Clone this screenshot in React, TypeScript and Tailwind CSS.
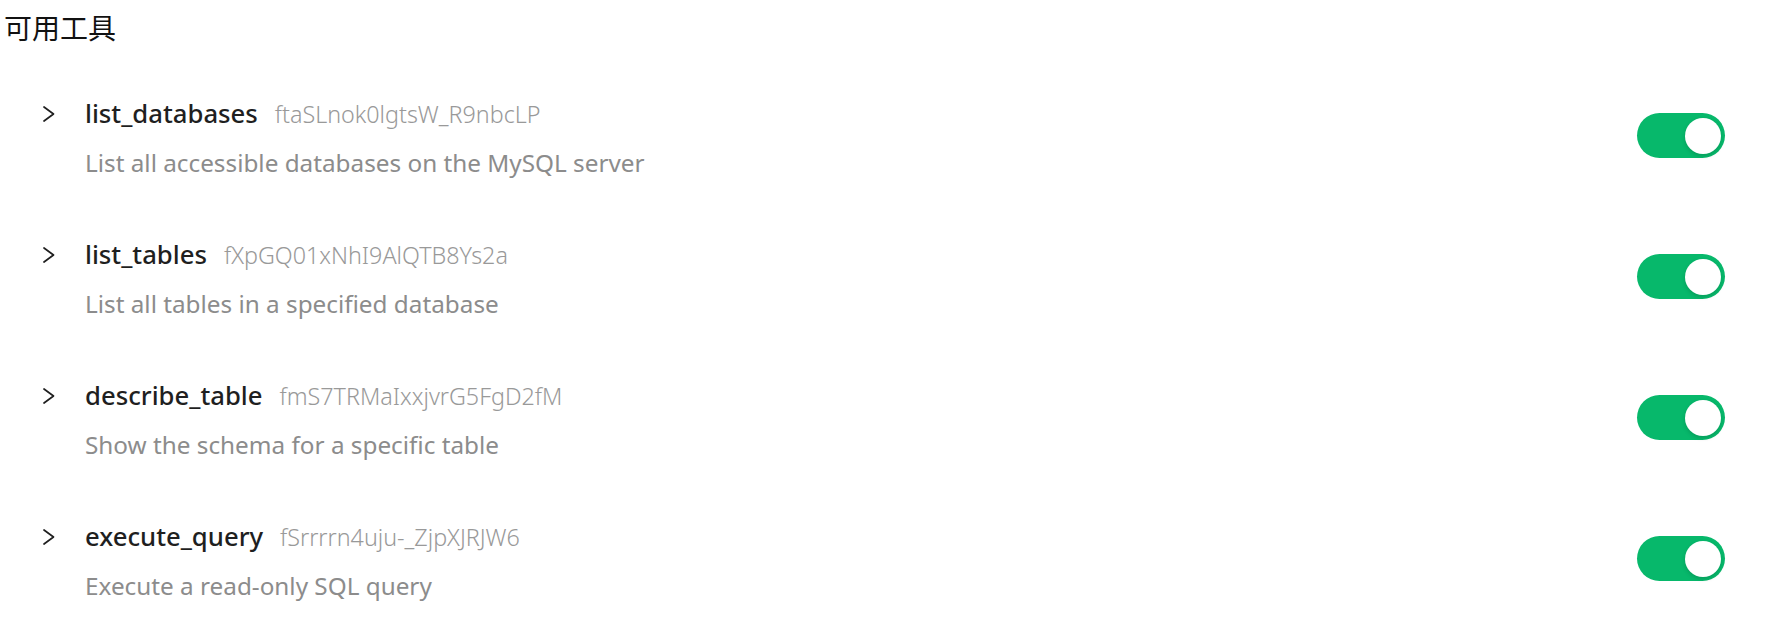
import React from "react";

type Tool = {
  name: string;
  id: string;
  description: string;
};

const TOOLS: Tool[] = [
  { name: "list_databases", id: "ftaSLnok0lgtsW_R9nbcLP", description: "List all accessible databases on the MySQL server" },
  { name: "list_tables", id: "fXpGQ01xNhI9AlQTB8Ys2a", description: "List all tables in a specified database" },
  { name: "describe_table", id: "fmS7TRMaIxxjvrG5FgD2fM", description: "Show the schema for a specific table" },
  { name: "execute_query", id: "fSrrrrn4uju-_ZjpXJRJW6", description: "Execute a read-only SQL query" },
];

function Chevron() {
  return (
    <svg width="16" height="20" viewBox="0 0 16 20" fill="none" className="shrink-0">
      <path d="M3 3 L12.5 10 L3 17" stroke="#1f1f1f" strokeWidth="1.7" strokeLinecap="round" strokeLinejoin="round" />
    </svg>
  );
}

function Toggle({ on }: { on: boolean }) {
  return (
    <button
      type="button"
      className={`relative flex h-[45px] w-[88px] shrink-0 items-center rounded-full px-[4px] ${on ? "justify-end bg-[#07b86b]" : "justify-start bg-gray-300"}`}
    >
      <span className="block h-[36px] w-[36px] rounded-full bg-white shadow-[0_2px_4px_rgba(0,0,0,0.15)]" />
    </button>
  );
}

export default function App() {
  return (
    <div className="h-[643px] w-full bg-white font-['Noto_Sans','Noto_Sans_CJK_SC',sans-serif]">
      <h2 className="pl-[4px] pt-[9px] text-[28px] leading-[36px] font-normal text-[#111] font-['Noto_Sans_CJK_SC',sans-serif]">
        可用工具
      </h2>

      <div className="mt-[54px] flex flex-col gap-[62px] pl-[41px] pr-[60px]">
        {TOOLS.map((tool) => (
          <div key={tool.name} className="flex items-start justify-between">
            <div className="flex flex-col gap-[19px]">
              <div className="flex h-[30px] items-center">
                <Chevron />
                <span className="ml-[28px] text-[25.7px] leading-[30px] font-medium text-[#1f1f1f]">{tool.name}</span>
                <span className="ml-[17px] text-[23.3px] leading-[30px] font-light text-[#999]">{tool.id}</span>
              </div>
              <div className="ml-[44px] h-[30px] text-[24.3px] leading-[30px] text-[#8c8c8c]">
                {tool.description}
              </div>
            </div>
            <div className="mt-[14px]">
              <Toggle on />
            </div>
          </div>
        ))}
      </div>
    </div>
  );
}
